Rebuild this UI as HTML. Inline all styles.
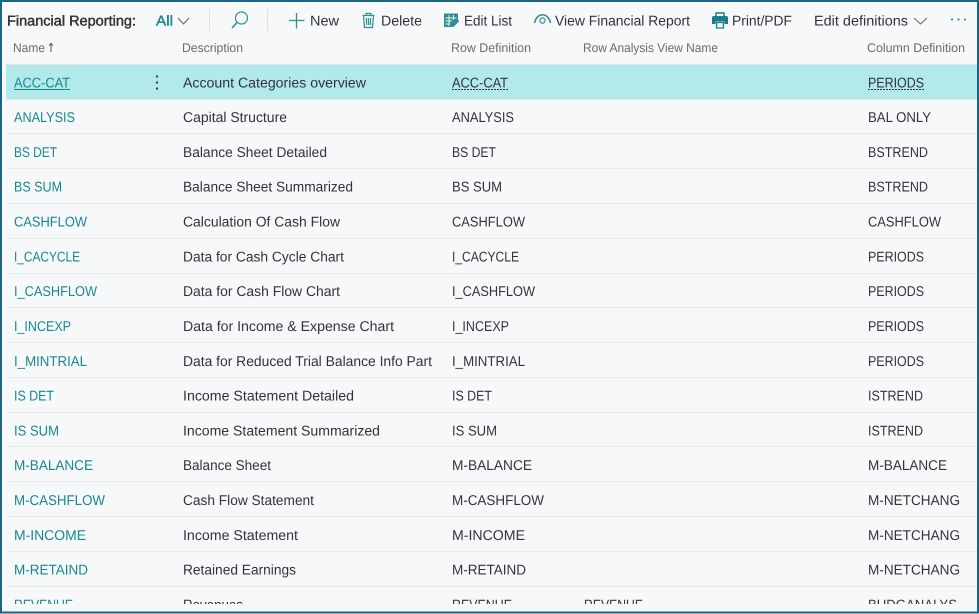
<!DOCTYPE html>
<html><head><meta charset="utf-8"><style>
html,body{margin:0;padding:0;width:979px;height:614px;overflow:hidden;background:#f7f8fa}
svg{display:block;filter:blur(.3px)}
text{font-family:"Liberation Sans",sans-serif;font-size:14.2px;fill:#2b2b2b;text-rendering:geometricPrecision}
.n text{fill:#178790}
.h text{fill:#6b6b6b;font-size:12.5px}
.t text{fill:#30343a}
</style></head><body>
<svg width="979" height="614" viewBox="0 0 979 614" xmlns="http://www.w3.org/2000/svg">
<defs><clipPath id="c"><rect x="0" y="0" width="979" height="604"/></clipPath></defs>
<rect width="979" height="614" fill="#f7f8fa"/>
<rect x="6" y="65" width="971" height="34" fill="#b2e9eb"/>
<g stroke="#e6e8ea" stroke-width="1">
<path d="M6 64.500H977M6 99.500H977M6 133.500H977M6 168.500H977M6 203.500H977M6 238.500H977M6 273.500H977M6 307.500H977M6 342.500H977M6 377.500H977M6 412.500H977M6 446.500H977M6 481.500H977M6 516.500H977M6 551.500H977M6 586.500H977"/>
</g>
<path d="M209.500 9V31M267.500 9V31" stroke="#dfe1e3" stroke-width="1"/>

<!-- toolbar -->
<g class="t">
<text x="7" y="25.500" textLength="129" lengthAdjust="spacingAndGlyphs" style="stroke:#262626;stroke-width:.4">Financial Reporting:</text>
<text x="310" y="25.500" textLength="29" lengthAdjust="spacingAndGlyphs">New</text>
<text x="381" y="25.500" textLength="41" lengthAdjust="spacingAndGlyphs">Delete</text>
<text x="464" y="25.500" textLength="48" lengthAdjust="spacingAndGlyphs">Edit List</text>
<text x="555" y="25.500" textLength="135" lengthAdjust="spacingAndGlyphs">View Financial Report</text>
<text x="732" y="25.500" textLength="60" lengthAdjust="spacingAndGlyphs">Print/PDF</text>
<text x="814" y="25.500" textLength="94" lengthAdjust="spacingAndGlyphs">Edit definitions</text>
</g>
<text x="156" y="25.500" textLength="17" lengthAdjust="spacingAndGlyphs" style="fill:#178790;stroke:#178790;stroke-width:.4">All</text>
<g fill="none" stroke="#5d6266" stroke-width="1">
<path d="M178 18l5.500 6 5.500-6"/>
<path d="M914 18l6.500 6 6.500-6"/>
</g>
<g fill="none" stroke="#2b8f98">
<circle cx="241.500" cy="18" r="6" stroke-width="1.200"/>
<path d="M237 22.500L232 28" stroke-width="1.500"/>
<path d="M296.500 13V28.500M289 20.500H304.500" stroke-width="1.300"/>
<path d="M362.500 15.500H374.500M366 15.500V13.500H371V15.500M363.500 15.500L364.500 27.500H372.500L373.500 15.500M366.500 18V25M368.500 18V25M370.500 18V25" stroke-width="1.200"/>
<path d="M534.500 23C537 12 548 12 550.500 23" stroke-width="1.600"/>
<circle cx="542.500" cy="20.500" r="2.600" stroke-width="1.200"/>
</g>
<g>
<path d="M444 13.500H458V20L452 27H444Z" fill="#2b8f98"/>
<path d="M445.500 18H456.500M445.500 21H452M445.500 24H450M449 15V26M453.500 15V20" stroke="#f7f8fa" stroke-width=".9" fill="none"/>
<path d="M452.500 26.500L458.500 20.500" stroke="#2b8f98" stroke-width="2"/>
<path d="M716 13H724V17H716Z" fill="none" stroke="#16808a" stroke-width="1.400"/>
<path d="M712 17.500Q712 16 714 16H726Q728 16 728 17.500V24H724.500V21.500H715.500V24H712Z" fill="#16808a"/>
<path d="M716.500 22.500H723.500V28H716.500Z" fill="none" stroke="#16808a" stroke-width="1.300"/>
</g>
<g fill="#16808a">
<circle cx="952" cy="19.500" r="1"/><circle cx="958.500" cy="19.500" r="1"/><circle cx="965" cy="19.500" r="1"/>
</g>

<!-- headers -->
<g class="h">
<text x="13" y="52" textLength="32" lengthAdjust="spacingAndGlyphs">Name</text>
<text x="182" y="52" textLength="61" lengthAdjust="spacingAndGlyphs">Description</text>
<text x="451" y="52" textLength="80" lengthAdjust="spacingAndGlyphs">Row Definition</text>
<text x="583" y="52" textLength="135" lengthAdjust="spacingAndGlyphs">Row Analysis View Name</text>
<text x="867" y="52" textLength="98" lengthAdjust="spacingAndGlyphs">Column Definition</text>
</g>
<path d="M51 52V43.500M49 45.500L51 43.500L53 45.500" fill="none" stroke="#6b6b6b" stroke-width="1.200"/>

<!-- kebab -->
<g fill="#333"><circle cx="157" cy="76.500" r="1.100"/><circle cx="157" cy="82.500" r="1.100"/><circle cx="157" cy="88.500" r="1.100"/></g>

<g clip-path="url(#c)">
<g class="n">
<text x="14" y="87.500" textLength="56" lengthAdjust="spacingAndGlyphs">ACC-CAT</text>
<text x="14" y="122" textLength="61" lengthAdjust="spacingAndGlyphs">ANALYSIS</text>
<text x="14" y="157" textLength="43" lengthAdjust="spacingAndGlyphs">BS DET</text>
<text x="14" y="191.700" textLength="48" lengthAdjust="spacingAndGlyphs">BS SUM</text>
<text x="14" y="226.500" textLength="73" lengthAdjust="spacingAndGlyphs">CASHFLOW</text>
<text x="14" y="261.300" textLength="66" lengthAdjust="spacingAndGlyphs">I_CACYCLE</text>
<text x="14" y="296.100" textLength="83" lengthAdjust="spacingAndGlyphs">I_CASHFLOW</text>
<text x="14" y="331" textLength="57" lengthAdjust="spacingAndGlyphs">I_INCEXP</text>
<text x="14" y="365.800" textLength="73" lengthAdjust="spacingAndGlyphs">I_MINTRIAL</text>
<text x="14" y="400.600" textLength="40" lengthAdjust="spacingAndGlyphs">IS DET</text>
<text x="14" y="435.400" textLength="45" lengthAdjust="spacingAndGlyphs">IS SUM</text>
<text x="14" y="470.200" textLength="79" lengthAdjust="spacingAndGlyphs">M-BALANCE</text>
<text x="14" y="505" textLength="91" lengthAdjust="spacingAndGlyphs">M-CASHFLOW</text>
<text x="14" y="539.800" textLength="72" lengthAdjust="spacingAndGlyphs">M-INCOME</text>
<text x="14" y="574.700" textLength="74" lengthAdjust="spacingAndGlyphs">M-RETAIND</text>
<text x="14" y="609.500" textLength="59" lengthAdjust="spacingAndGlyphs">REVENUE</text>
</g>
<g class="t">
<text x="183" y="87.500" textLength="183" lengthAdjust="spacingAndGlyphs">Account Categories overview</text>
<text x="183" y="122" textLength="104" lengthAdjust="spacingAndGlyphs">Capital Structure</text>
<text x="183" y="157" textLength="144" lengthAdjust="spacingAndGlyphs">Balance Sheet Detailed</text>
<text x="183" y="191.700" textLength="170" lengthAdjust="spacingAndGlyphs">Balance Sheet Summarized</text>
<text x="183" y="226.500" textLength="157" lengthAdjust="spacingAndGlyphs">Calculation Of Cash Flow</text>
<text x="183" y="261.300" textLength="161" lengthAdjust="spacingAndGlyphs">Data for Cash Cycle Chart</text>
<text x="183" y="296.100" textLength="157" lengthAdjust="spacingAndGlyphs">Data for Cash Flow Chart</text>
<text x="183" y="331" textLength="211" lengthAdjust="spacingAndGlyphs">Data for Income &amp; Expense Chart</text>
<text x="183" y="365.800" textLength="249" lengthAdjust="spacingAndGlyphs">Data for Reduced Trial Balance Info Part</text>
<text x="183" y="400.600" textLength="171" lengthAdjust="spacingAndGlyphs">Income Statement Detailed</text>
<text x="183" y="435.400" textLength="197" lengthAdjust="spacingAndGlyphs">Income Statement Summarized</text>
<text x="183" y="470.200" textLength="88" lengthAdjust="spacingAndGlyphs">Balance Sheet</text>
<text x="183" y="505" textLength="131" lengthAdjust="spacingAndGlyphs">Cash Flow Statement</text>
<text x="183" y="539.800" textLength="115" lengthAdjust="spacingAndGlyphs">Income Statement</text>
<text x="183" y="574.700" textLength="113" lengthAdjust="spacingAndGlyphs">Retained Earnings</text>
<text x="183" y="609.500" textLength="60" lengthAdjust="spacingAndGlyphs">Revenues</text>

<text x="452" y="87.500" textLength="56" lengthAdjust="spacingAndGlyphs">ACC-CAT</text>
<text x="452" y="122" textLength="62" lengthAdjust="spacingAndGlyphs">ANALYSIS</text>
<text x="452" y="157" textLength="44" lengthAdjust="spacingAndGlyphs">BS DET</text>
<text x="452" y="191.700" textLength="50" lengthAdjust="spacingAndGlyphs">BS SUM</text>
<text x="452" y="226.500" textLength="73" lengthAdjust="spacingAndGlyphs">CASHFLOW</text>
<text x="452" y="261.300" textLength="67" lengthAdjust="spacingAndGlyphs">I_CACYCLE</text>
<text x="452" y="296.100" textLength="83" lengthAdjust="spacingAndGlyphs">I_CASHFLOW</text>
<text x="452" y="331" textLength="57" lengthAdjust="spacingAndGlyphs">I_INCEXP</text>
<text x="452" y="365.800" textLength="73" lengthAdjust="spacingAndGlyphs">I_MINTRIAL</text>
<text x="452" y="400.600" textLength="40" lengthAdjust="spacingAndGlyphs">IS DET</text>
<text x="452" y="435.400" textLength="45" lengthAdjust="spacingAndGlyphs">IS SUM</text>
<text x="452" y="470.200" textLength="80" lengthAdjust="spacingAndGlyphs">M-BALANCE</text>
<text x="452" y="505" textLength="92" lengthAdjust="spacingAndGlyphs">M-CASHFLOW</text>
<text x="452" y="539.800" textLength="73" lengthAdjust="spacingAndGlyphs">M-INCOME</text>
<text x="452" y="574.700" textLength="74" lengthAdjust="spacingAndGlyphs">M-RETAIND</text>
<text x="452" y="609.500" textLength="60" lengthAdjust="spacingAndGlyphs">REVENUE</text>

<text x="584" y="609.500" textLength="59" lengthAdjust="spacingAndGlyphs">REVENUE</text>

<text x="868" y="87.500" textLength="56" lengthAdjust="spacingAndGlyphs">PERIODS</text>
<text x="868" y="122" textLength="63" lengthAdjust="spacingAndGlyphs">BAL ONLY</text>
<text x="868" y="157" textLength="60" lengthAdjust="spacingAndGlyphs">BSTREND</text>
<text x="868" y="191.700" textLength="60" lengthAdjust="spacingAndGlyphs">BSTREND</text>
<text x="868" y="226.500" textLength="73" lengthAdjust="spacingAndGlyphs">CASHFLOW</text>
<text x="868" y="261.300" textLength="56" lengthAdjust="spacingAndGlyphs">PERIODS</text>
<text x="868" y="296.100" textLength="56" lengthAdjust="spacingAndGlyphs">PERIODS</text>
<text x="868" y="331" textLength="56" lengthAdjust="spacingAndGlyphs">PERIODS</text>
<text x="868" y="365.800" textLength="56" lengthAdjust="spacingAndGlyphs">PERIODS</text>
<text x="868" y="400.600" textLength="55" lengthAdjust="spacingAndGlyphs">ISTREND</text>
<text x="868" y="435.400" textLength="55" lengthAdjust="spacingAndGlyphs">ISTREND</text>
<text x="868" y="470.200" textLength="79" lengthAdjust="spacingAndGlyphs">M-BALANCE</text>
<text x="868" y="505" textLength="92" lengthAdjust="spacingAndGlyphs">M-NETCHANG</text>
<text x="868" y="539.800" textLength="92" lengthAdjust="spacingAndGlyphs">M-NETCHANG</text>
<text x="868" y="574.700" textLength="92" lengthAdjust="spacingAndGlyphs">M-NETCHANG</text>
<text x="868" y="609.500" textLength="89" lengthAdjust="spacingAndGlyphs">BUDGANALYS</text>
</g>
</g>
<!-- underlines -->
<path d="M14 89.500H70" stroke="#178790" stroke-width="1"/>
<path d="M452 89.500H508M868 89.500H924" stroke="#333" stroke-width="1" stroke-dasharray="2 1"/>
<!-- window border -->
<rect x="1" y="1" width="977" height="611.500" fill="none" stroke="#1f6383" stroke-width="2"/>
</svg>
</body></html>
